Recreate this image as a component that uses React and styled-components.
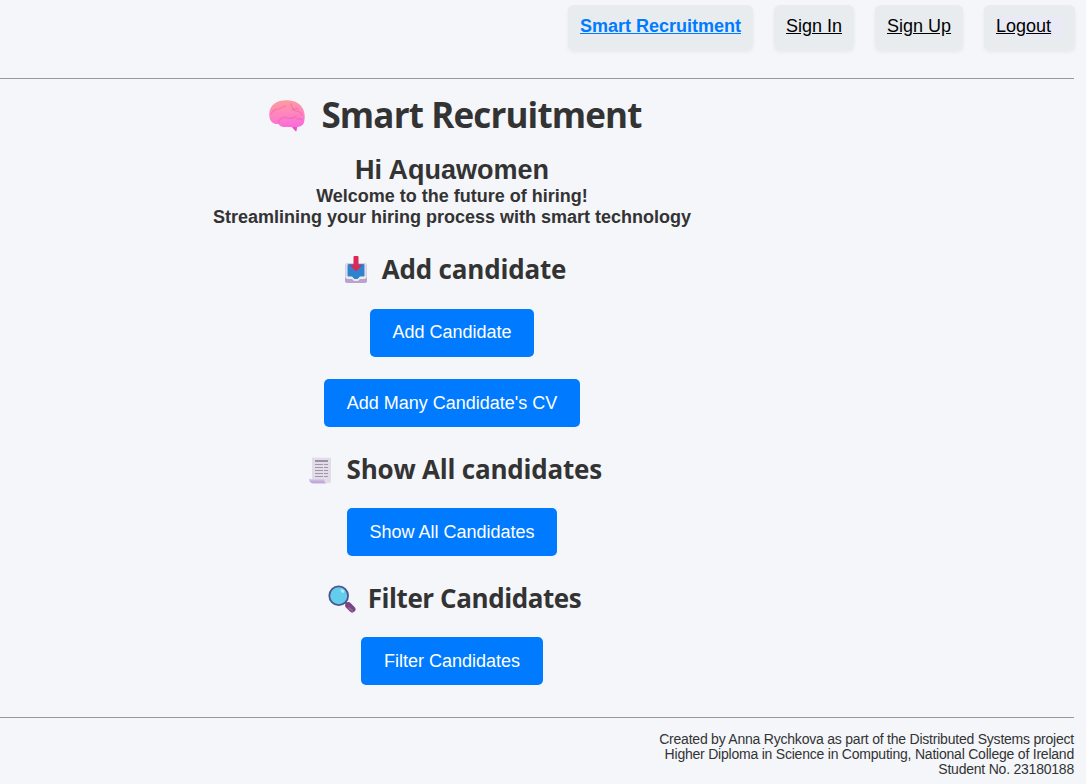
import React from "react";
import styled, { createGlobalStyle } from "styled-components";

const GlobalStyle = createGlobalStyle`
  * { box-sizing: border-box; }
  body {
    margin: 0;
    background: #f4f6fa;
    color: #333;
    font-family: Arial, "Liberation Sans", sans-serif;
    overflow: hidden;
  }
`;

const Page = styled.div`
  width: 1074px;
  height: 784px;
`;

const Nav = styled.nav`
  display: flex;
  justify-content: flex-end;
  gap: 21.4px;
  height: 78px;
  padding-top: 5px;
  margin-right: -0.5px;
`;

const NavItem = styled.div`
  height: 45px;
  padding: 11px 11.8px 0;
  border-radius: 6px;
  background: #e8ecef;
  box-shadow: 0 2px 4px rgba(0, 0, 0, 0.06);
`;

const NavLink = styled.a`
  display: block;
  font-size: 18px;
  line-height: 21px;
  white-space: nowrap;
  text-decoration: underline;
  color: ${(p) => (p.$brand ? "#007bff" : "#000")};
  font-weight: ${(p) => (p.$brand ? 700 : 400)};
  background: ${(p) => (p.$soft ? "#e9eaf6" : "transparent")};
  border-radius: 5px;
  padding-right: ${(p) => (p.$soft ? 11.6 : 0)}px;
`;

const Rule = styled.hr`
  height: 1px;
  margin: 0;
  border: 0;
  background: #999;
`;

const Main = styled.main`
  width: 904px;
  height: 638px;
  padding-top: 12px;
  display: flex;
  flex-direction: column;
  align-items: center;
`;

const Title = styled.h1`
  display: flex;
  align-items: center;
  gap: 16px;
  height: 48px;
  margin: 0 0 15px 7px;
  font: 700 35px/48px "Segoe UI", "Open Sans", sans-serif;
  letter-spacing: -0.86px;
  white-space: nowrap;
  svg { margin-top: 3px; }
`;

const Heading = styled.h2`
  display: flex;
  align-items: center;
  gap: ${(p) => p.$gap}px;
  height: 36px;
  margin: ${(p) => p.$top}px 0 ${(p) => p.$bottom}px ${(p) => p.$shift || 0}px;
  font: 700 26px/36px "Segoe UI", "Open Sans", sans-serif;
  letter-spacing: ${(p) => p.$track}px;
  white-space: nowrap;
  svg { margin-top: 2px; }
`;

const Greeting = styled.h2`
  margin: 0;
  font-size: 27px;
  line-height: 33px;
`;

const Tagline = styled.p`
  margin: 0;
  font-size: 18px;
  line-height: 21px;
  font-weight: 700;
  ${Greeting} + & { margin-top: -1px; }
`;

const Button = styled.button`
  height: 48px;
  flex: none;
  padding: 0 22.5px ${(p) => (p.$raised ? 2 : 0)}px;
  border: 0;
  border-radius: 5px;
  background: #007bff;
  color: #fff;
  font: 400 18px/21px Arial, "Liberation Sans", sans-serif;
  white-space: nowrap;
  & + & { margin-top: 22px; }
`;

const Footer = styled.footer`
  padding-top: 14px;
  text-align: right;
  font-size: 14px;
  line-height: 15px;
  letter-spacing: -0.22px;
`;

const Brain = () => (
  <svg width="36" height="33" viewBox="0 0 36 33">
    <defs>
      <linearGradient id="brain" x1="0.4" y1="0" x2="0.5" y2="1">
        <stop offset="0" stopColor="#ff9b9e" />
        <stop offset="0.5" stopColor="#ff86bd" />
        <stop offset="1" stopColor="#fb6bdc" />
      </linearGradient>
    </defs>
    <path d="M21 25h7.500l-1 6q-.6.700-1.200 0l-3-3.500Z" fill="#ee4fbd" />
    <path d="M.5 12C1.500 6 6 2 12 .8c3-.8 6-.8 9-.3 7 .8 11.500 4.500 13.500 9.500q2 6 .7 11.500c-.7 4-4 5.500-8.200 5.500H17c-4 0-6-.5-7.500-3C5 24.500 1.500 22 .6 18Q-.1 15 .5 12Z" fill="url(#brain)" />
    <path d="M2 14c2-4 5-5 8-5 3-1 5-3 7-3M9.500 23c0-4 3-5 6-6 4 2 8 2 12-1M22 4c1 4 2 6 5 7 3 0 5 2 6 4M23 10c3-2 5-1 6-1M28 19q3-1 5 1" fill="none" stroke="#e15b9e" strokeWidth="1.100" strokeLinecap="round" opacity="0.5" />
  </svg>
);

const Inbox = () => (
  <svg width="24" height="28" viewBox="0 0 24 28">
    <rect x="1" y="7" width="22" height="20" rx="2.500" fill="#d5d1df" />
    <path d="M1 22h22v2.500a2.500 2.500 0 0 1-2.500 2.500h-17A2.500 2.500 0 0 1 1 24.500Z" fill="#b8a3cf" />
    <path d="M2.500 8h19v15H16l-2 2h-4l-2-2H2.500Z" fill="#eee9f3" />
    <path d="M5 8h14.500q1 0 1 1v10.500q0 1-1 1H16l-2.500 2.500h-3L8 20.500H4.500q-1 0-1-1V9q0-1 1.500-1Z" fill="#2e83cf" />
    <path d="M9.500 1q0-1 1-1h3q1 0 1 1v8h2.700q1 .4.400 1l-4.600 4.500q-1 .6-2 0L6.400 10q-.5-.8.400-1h2.700Z" fill="#dc2855" />
  </svg>
);

const Receipt = () => (
  <svg width="23" height="27" viewBox="0 0 23 27">
    <path d="M3 1l1.300-.7L5.700 1 7 .3 8.500 1 10 .3l1.500.7L13 .3l1.500.7L16 .3l1.500.7L19 .3l1.300.7L22 .4V24q0 2-2 2H7l-4-4Z" fill="#e2dce9" />
    <path d="M0 22h15q0 4 3 4.500H4Q.5 26 0 22Z" fill="#c1aadb" />
    <path d="M0 22h15l.5 1.500H1Z" fill="#d8c9e8" />
    <path d="M6 4h13" stroke="#95899f" strokeWidth="1.800" />
    <path d="M6 7.500h8m1 0h4M6 10.500h8m1 0h4M6 13.500h8m1 0h4M6 16.500h8m1 0h4M6 19.500h8m1 0h4" stroke="#a097a9" strokeWidth="1.100" />
  </svg>
);

const Magnifier = () => (
  <svg width="28" height="28" viewBox="0 0 28 28">
    <path d="m17 17 4 4" stroke="#6b5e80" strokeWidth="2.500" />
    <path d="m20.500 20.500 3.700 3.700" stroke="#7c4484" strokeWidth="6.500" strokeLinecap="round" />
    <path d="m21 23 3.500 3" stroke="#9a609e" strokeWidth="2" strokeLinecap="round" />
    <circle cx="10.700" cy="10.700" r="9.400" fill="#64cdec" stroke="#4c5590" strokeWidth="1.800" />
    <ellipse cx="14.500" cy="6" rx="2" ry="1.500" fill="#b8eafb" transform="rotate(35 14.500 6)" />
  </svg>
);

export default function App() {
  return (
    <>
      <GlobalStyle />
      <Page>
        <Nav>
          <NavItem><NavLink $brand>Smart Recruitment</NavLink></NavItem>
          <NavItem><NavLink>Sign In</NavLink></NavItem>
          <NavItem><NavLink>Sign Up</NavLink></NavItem>
          <NavItem><NavLink $soft>Logout</NavLink></NavItem>
        </Nav>
        <Rule />
        <Main>
          <Title><Brain /><span>Smart Recruitment</span></Title>
          <Greeting>Hi Aquawomen</Greeting>
          <Tagline>Welcome to the future of hiring!</Tagline>
          <Tagline>Streamlining your hiring process with smart technology</Tagline>
          <Heading $top={23} $bottom={22} $gap={14} $shift={6} $track={-0.19}><Inbox /><span>Add candidate</span></Heading>
          <Button $raised>Add Candidate</Button>
          <Button>Add Many Candidate's CV</Button>
          <Heading $top={24} $bottom={21} $gap={14.5} $shift={7} $track={-0.21}><Receipt /><span>Show All candidates</span></Heading>
          <Button>Show All Candidates</Button>
          <Heading $top={24} $bottom={21} $gap={12} $shift={5} $track={-0.43}><Magnifier /><span>Filter Candidates</span></Heading>
          <Button>Filter Candidates</Button>
        </Main>
        <Rule />
        <Footer>
          <div>Created by Anna Rychkova as part of the Distributed Systems project</div>
          <div>Higher Diploma in Science in Computing, National College of Ireland</div>
          <div>Student No. 23180188</div>
        </Footer>
      </Page>
    </>
  );
}
